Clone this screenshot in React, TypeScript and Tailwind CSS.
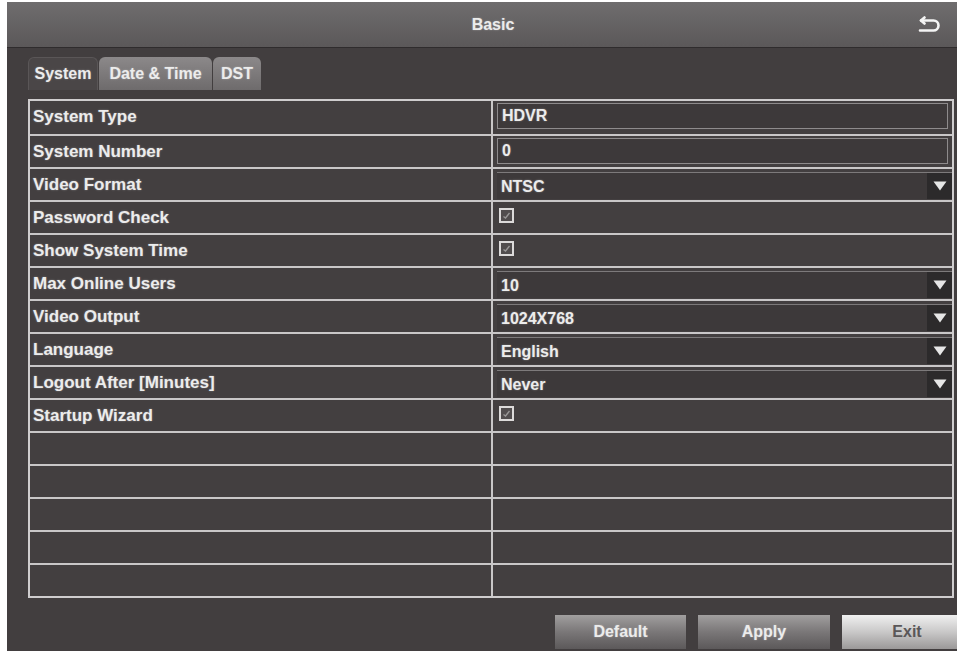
import React from 'react';

// --- setting rows on the Basic > System page ---
type Row =
  | { label: string; kind: 'text'; value: string }
  | { label: string; kind: 'select'; value: string }
  | { label: string; kind: 'check' }
  | { label: ''; kind: 'empty' };

const ROWS: Row[] = [
  { label: 'System Type', kind: 'text', value: 'HDVR' },
  { label: 'System Number', kind: 'text', value: '0' },
  { label: 'Video Format', kind: 'select', value: 'NTSC' },
  { label: 'Password Check', kind: 'check' },
  { label: 'Show System Time', kind: 'check' },
  { label: 'Max Online Users', kind: 'select', value: '10' },
  { label: 'Video Output', kind: 'select', value: '1024X768' },
  { label: 'Language', kind: 'select', value: 'English' },
  { label: 'Logout After [Minutes]', kind: 'select', value: 'Never' },
  { label: 'Startup Wizard', kind: 'check' },
  { label: '', kind: 'empty' },
  { label: '', kind: 'empty' },
  { label: '', kind: 'empty' },
  { label: '', kind: 'empty' },
  { label: '', kind: 'empty' },
];

const TABS = [
  { name: 'System', w: 'w-[70px]', active: true },
  { name: 'Date & Time', w: 'w-[113px]', active: false },
  { name: 'DST', w: 'w-[48px]', active: false },
];

const ReturnIcon = () => (
  <svg width="24" height="17" viewBox="0 0 24 17" fill="none" stroke="#f4f4f4" strokeWidth="2.6" strokeLinecap="round" strokeLinejoin="round">
    <path d="M4 4.5 H16.5 a5 5 0 0 1 0 10 H3" />
    <path d="M7.5 1.5 L4 4.5 L7.5 7.5" />
  </svg>
);

const CheckBox = () => (
  <svg width="15" height="15" viewBox="0 0 15 15" fill="none">
    <rect x="1" y="1" width="13" height="13" stroke="#dcdada" strokeWidth="2" fill="#514d4e" />
    <path d="M4.5 8.5 L6.5 10 L10.5 5" stroke="#9a9898" strokeWidth="1.3" />
  </svg>
);

const Arrow = () => (
  <div className="w-[25px] h-full flex items-center justify-center bg-[#2c2a2b]">
    <svg width="14" height="10" viewBox="0 0 14 10">
      <path d="M0.5 0.5 H13.5 L7 9.5 Z" fill="#e6e6e6" />
    </svg>
  </div>
);

const ValueCell = ({ row }: { row: Row }) => {
  if (row.kind === 'text') {
    return (
      <div className="h-[26px] mx-[4px] mt-[2px] border border-[#8e8b8c] bg-[#3d393a] flex items-center px-[4px]">
        {row.value}
      </div>
    );
  }
  if (row.kind === 'select') {
    return (
      <div className="h-[27px] ml-[4px] mt-[3px] flex border-t border-[#7d7a7b] bg-[#3d393a]">
        <div className="flex-1 flex items-center px-[4px] pt-[2px]">{row.value}</div>
        <Arrow />
      </div>
    );
  }
  if (row.kind === 'check') {
    return (
      <div className="h-full flex items-center pl-[6px] pb-[4px]">
        <CheckBox />
      </div>
    );
  }
  return null;
};

const App: React.FC = () => {
  return (
    <div
      className="w-[959px] h-[651px] bg-white pl-[7px] pt-[2px] pr-[2px] overflow-hidden"
      style={{ fontFamily: '"Liberation Sans", Arial, sans-serif' }}
    >
      <div className="h-full bg-[#423e3f] flex flex-col overflow-hidden text-[#ececec] font-bold [text-shadow:0_0_2px_rgba(255,255,255,0.35)]">
        {/* title bar */}
        <div className="h-[46px] shrink-0 bg-gradient-to-b from-[#6f6d6e] to-[#5b5859] border-b border-[#2f2c2d] flex items-center relative">
          <div className="flex-1 text-center text-[16px] pl-[22px]">Basic</div>
          <div className="absolute right-[16px] top-[14px]">
            <ReturnIcon />
          </div>
        </div>

        <div className="px-[21px] pt-[9px] flex flex-col">
          {/* tabs */}
          <div className="flex h-[33px] gap-[1px]">
            {TABS.map(t => (
              <div
                key={t.name}
                className={`${t.w} rounded-t-[6px] flex items-center justify-center text-[16px] ${
                  t.active
                    ? 'bg-[#4a4647] border border-b-0 border-[#5a5657]'
                    : 'bg-gradient-to-b from-[#8c898a] to-[#6e6b6c]'
                }`}
              >
                {t.name}
              </div>
            ))}
          </div>

          {/* settings table */}
          <div className="mt-[9px] w-[926px] border-2 border-[#cfcdce] bg-[#433f40]">
            {ROWS.map((row, i) => (
              <div
                key={i}
                className={`grid grid-cols-[463px_1fr] h-[33px] ${i > 0 ? 'border-t-2 border-[#c9c7c8]' : ''}`}
              >
                <div className="border-r-2 border-[#c9c7c8] pl-[3px] pt-[6px] text-[17px] leading-[20px]">
                  {row.label}
                </div>
                <div className="text-[16px]">
                  <ValueCell row={row} />
                </div>
              </div>
            ))}
          </div>

          {/* action buttons */}
          <div className="flex gap-[12px] pl-[527px] mt-[17px] text-[16px]">
            <div className="w-[131px] h-[34px] shrink-0 bg-gradient-to-b from-[#a19f9f] via-[#7a7778] to-[#5c595a] flex items-center justify-center">
              Default
            </div>
            <div className="w-[132px] h-[34px] shrink-0 bg-gradient-to-b from-[#a19f9f] via-[#7a7778] to-[#5c595a] flex items-center justify-center">
              Apply
            </div>
            <div className="w-[130px] h-[34px] shrink-0 bg-gradient-to-b from-[#f0f0f0] via-[#c9c8c8] to-[#9b9999] flex items-center justify-center text-[#5a5758] [text-shadow:none]">
              Exit
            </div>
          </div>
        </div>
      </div>
    </div>
  );
};

export default App;
